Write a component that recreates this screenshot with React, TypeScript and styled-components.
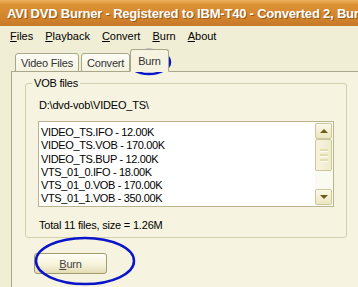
import styled, { createGlobalStyle } from 'styled-components'

const files = [
  'VIDEO_TS.IFO - 12.00K',
  'VIDEO_TS.VOB - 170.00K',
  'VIDEO_TS.BUP - 12.00K',
  'VTS_01_0.IFO - 18.00K',
  'VTS_01_0.VOB - 170.00K',
  'VTS_01_1.VOB - 350.00K',
  'VTS_01_0.BUP - 18.00K',
  'VTS_01_2.VOB - 350.00K',
]

const menus = ['Files', 'Playback', 'Convert', 'Burn', 'About']

function Underlined({ text }: { text: string }) {
  return (
    <>
      <u>{text[0]}</u>
      {text.slice(1)}
    </>
  )
}

function AppIcon() {
  return (
    <svg width="18" height="18" viewBox="0 0 18 18">
      <ellipse cx="7" cy="6" rx="4" ry="4" fill="#2a5cd8" />
      <circle cx="6" cy="5" r="1.4" fill="#fff" />
      <path d="M3 9 C5 7 10 7 13 9 L15 14 C11 17 6 16 3 12 Z" fill="#3cb43c" />
      <path d="M8 10 C10 9 13 10 14 12 L12 15 C10 14 8 13 8 10 Z" fill="#e03a8a" />
      <path d="M11 3 L16 5 L13 7 Z" fill="#f2c200" />
      <path d="M2 12 L5 11 L4 15 Z" fill="#f08a00" />
    </svg>
  )
}

function App() {
  return (
    <>
      <GlobalStyle />
      <Window>
        <TitleBar>
          <AppIcon />
          <TitleText>AVI DVD Burner - Registered to IBM-T40 - Converted 2, Burn</TitleText>
        </TitleBar>
        <MenuBar>
          {menus.map((m) => (
            <MenuItem key={m}>
              <Underlined text={m} />
            </MenuItem>
          ))}
        </MenuBar>
        <Body>
          <TabStrip>
            <Tab>Video Files</Tab>
            <Tab>Convert</Tab>
            <Tab $active>Burn</Tab>
          </TabStrip>
          <TabPanel>
            <GroupBox>
              <GroupLegend>VOB files</GroupLegend>
              <PathLabel>D:\dvd-vob\VIDEO_TS\</PathLabel>
              <ListBox>
                <ListItems>
                  {files.map((f) => (
                    <ListItem key={f}>{f}</ListItem>
                  ))}
                </ListItems>
                <ScrollBar>
                  <ScrollButton>
                    <Arrow />
                  </ScrollButton>
                  <Thumb>
                    <Grip />
                    <Grip />
                    <Grip />
                  </Thumb>
                  <Track />
                  <ScrollButton>
                    <Arrow $down />
                  </ScrollButton>
                </ScrollBar>
              </ListBox>
              <Summary>Total 11 files, size = 1.26M</Summary>
            </GroupBox>
            <BurnButton>
              <Underlined text="Burn" />
            </BurnButton>
          </TabPanel>
        </Body>
        <Annotation viewBox="0 0 46 28" width="46" height="28" $left={126} $top={48}>
          <ellipse cx="23" cy="14" rx="21" ry="12" fill="none" stroke="#0a14c8" strokeWidth="2.5" />
        </Annotation>
        <Annotation viewBox="0 0 104 52" width="104" height="52" $left={34} $top={236}>
          <ellipse cx="51" cy="25" rx="49" ry="23" fill="none" stroke="#0a14c8" strokeWidth="2.5" />
        </Annotation>
      </Window>
    </>
  )
}

const GlobalStyle = createGlobalStyle`
    body {
        margin: 0;
        background: #f1eed6;
    }
`

const Window = styled.div`
    position: relative;
    width: 358px;
    height: 287px;
    overflow: hidden;

    display: flex;
    flex-direction: column;

    background-color: #f1eed6;
    font-family: "Liberation Sans", Arial, sans-serif;
    font-size: 11px;
    letter-spacing: -0.2px;
    color: #000;
`

// Title bar

const TitleBar = styled.div`
    height: 26px;
    flex: none;
    padding-left: 3px;

    display: flex;
    align-items: center;
    gap: 4px;

    background: linear-gradient(180deg, #eeb25e 0%, #dc9135 18%, #d5862c 60%, #c8792a 100%);
    white-space: nowrap;
`

const TitleText = styled.span`
    color: #fff;
    font-weight: bold;
    font-size: 13px;
    letter-spacing: -0.2px;
    text-shadow: 1px 1px 0 #9a5a18;
`

// Menu bar

const MenuBar = styled.div`
    height: 19px;
    flex: none;
    padding-left: 4px;

    display: flex;
    align-items: center;
`

const MenuItem = styled.span`
    padding: 0 6px;
    font-size: 11px;
    letter-spacing: 0;
`

// Tabs

const Body = styled.div`
    flex: 1;
    padding: 5px 0 0 11px;

    display: flex;
    flex-direction: column;
`

const TabStrip = styled.div`
    height: 22px;
    padding-left: 4px;

    display: flex;
    align-items: flex-end;
    gap: 2px;

    position: relative;
    z-index: 1;
    margin-bottom: -1px;
`

const Tab = styled.div<{ $active?: boolean }>`
    height: ${(p) => (p.$active ? 21 : 17)}px;
    padding: 0 ${(p) => (p.$active ? 7 : 5)}px;
    margin: 0 ${(p) => (p.$active ? -2 : 0)}px;

    display: flex;
    align-items: center;

    border: 1px solid #a9a78a;
    border-bottom-color: ${(p) => (p.$active ? '#f6f4e0' : '#a9a78a')};
    border-radius: 3px 3px 0 0;
    background: ${(p) =>
      p.$active
        ? '#f6f4e0'
        : 'linear-gradient(180deg, #fdfdf7 0%, #f4f2de 100%)'};
    color: #333;
    font-size: 11px;
    white-space: nowrap;
`

const TabPanel = styled.div`
    flex: 1;
    width: 360px;
    padding: 11px 0 0 13px;

    display: flex;
    flex-direction: column;

    border: 1px solid #aaa78a;
    border-bottom: none;
    background-color: #f6f4e0;
`

// Group box

const GroupBox = styled.div`
    position: relative;
    width: 322px;
    height: 155px;
    padding: 15px 0 0 12px;
    box-sizing: border-box;

    display: flex;
    flex-direction: column;

    border: 1px solid #d2cfaf;
    border-radius: 3px;
`

const GroupLegend = styled.span`
    position: absolute;
    top: -7px;
    left: 6px;
    padding: 0 2px;

    background-color: #f6f4e0;
    line-height: 13px;
`

const PathLabel = styled.div`
    height: 22px;
    padding-left: 1px;
`

const ListBox = styled.div`
    width: 296px;
    height: 86px;
    box-sizing: border-box;

    display: flex;

    border: 1px solid #b9b58f;
    background-color: #fff;
    overflow: hidden;
`

const ListItems = styled.div`
    flex: 1;
    padding: 4px 0 0 2px;
    overflow: hidden;
    letter-spacing: -0.35px;
`

const ListItem = styled.div`
    height: 13.3px;
    line-height: 13px;
    white-space: nowrap;
`

// Scroll bar

const ScrollBar = styled.div`
    width: 17px;
    padding: 1px 1px 1px 0;

    display: flex;
    flex-direction: column;

    background-color: #fbfaf1;
`

const ScrollButton = styled.div`
    height: 16px;
    flex: none;

    display: flex;
    align-items: center;
    justify-content: center;

    border: 1px solid #cdc79e;
    border-radius: 2px;
    background: linear-gradient(180deg, #fbf9e8 0%, #ece6c2 100%);
    box-sizing: border-box;
`

const Arrow = styled.span<{ $down?: boolean }>`
    width: 0;
    height: 0;
    border-left: 4px solid transparent;
    border-right: 4px solid transparent;
    ${(p) => (p.$down ? 'border-top' : 'border-bottom')}: 4px solid #6d5c14;
`

const Thumb = styled.div`
    height: 32px;
    flex: none;

    display: flex;
    flex-direction: column;
    align-items: center;
    justify-content: center;
    gap: 2px;

    border: 1px solid #cdc79e;
    border-radius: 2px;
    background: linear-gradient(90deg, #f7f4dc 0%, #efebcc 100%);
    box-sizing: border-box;
`

const Grip = styled.span`
    width: 8px;
    height: 2px;
    background-color: #e4ddb0;
    border-bottom: 1px solid #fffdf0;
`

const Track = styled.div`
    flex: 1;
`

const Summary = styled.div`
    margin-top: 12px;
    padding-left: 1px;
`

// Button

const BurnButton = styled.div`
    width: 73px;
    height: 21px;
    margin: 15px 0 0 9px;
    box-sizing: border-box;

    display: flex;
    align-items: center;
    justify-content: center;

    border: 1px solid #a39c6c;
    border-radius: 3px;
    background: linear-gradient(180deg, #fffef6 0%, #f5f1d8 60%, #e3dcb4 100%);
    color: #444;
`

// Annotations drawn over the screenshot

const Annotation = styled.svg<{ $left: number; $top: number }>`
    position: absolute;
    left: ${(p) => p.$left}px;
    top: ${(p) => p.$top}px;
    pointer-events: none;
`

export default App
